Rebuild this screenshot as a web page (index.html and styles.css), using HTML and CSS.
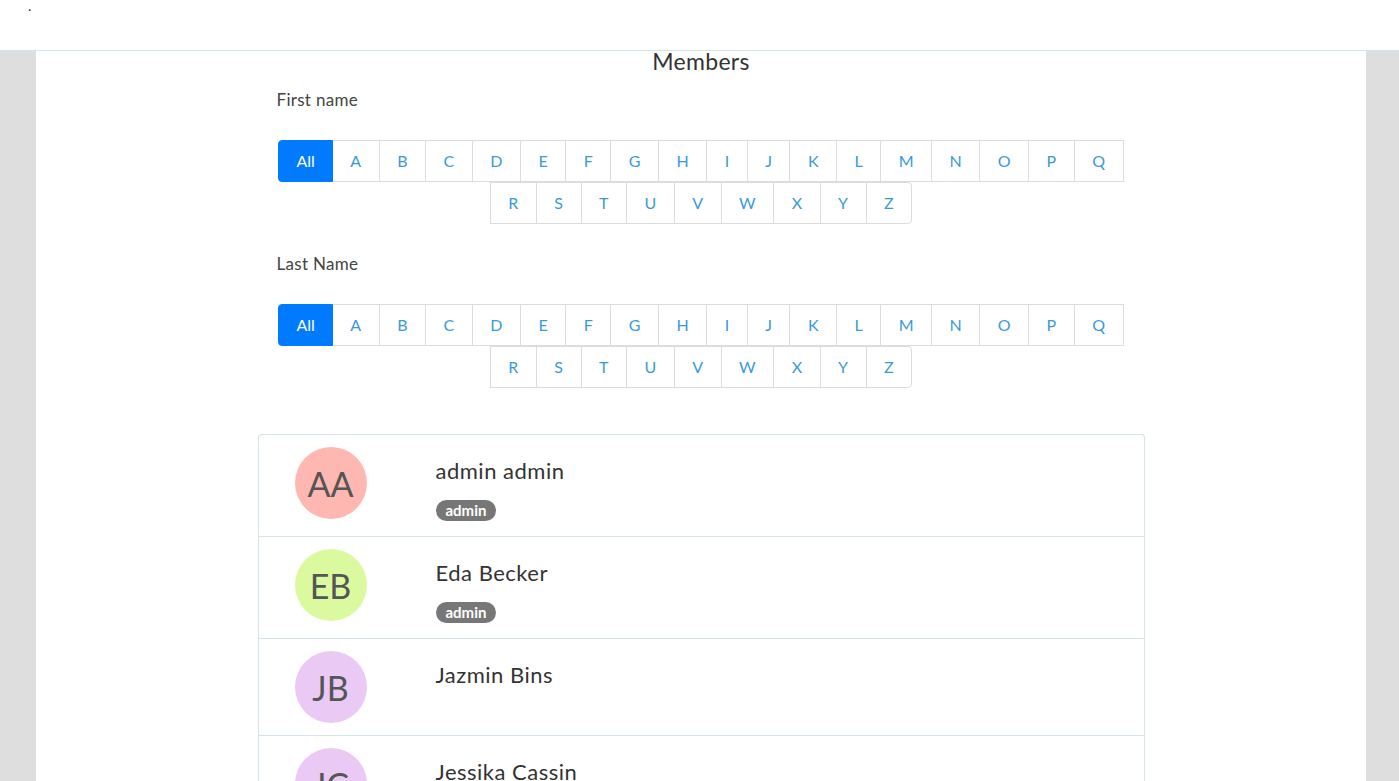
FILE: index.html
```html
<!DOCTYPE html>
<html>
<head>
<meta charset="utf-8">
<link rel="stylesheet" href="styles.css">
</head>
<body>
<header class="topbar"><span class="brand">.</span></header>
<main class="content">
  <h2 class="title">Members</h2>
  <section class="filters">
    <div class="filter">
      <div class="label">First name</div>
      <ul class="pagination">
        <li class="pg active">All</li><li class="pg">A</li><li class="pg">B</li><li class="pg">C</li><li class="pg">D</li><li class="pg">E</li><li class="pg">F</li><li class="pg">G</li><li class="pg">H</li><li class="pg">I</li><li class="pg">J</li><li class="pg">K</li><li class="pg">L</li><li class="pg">M</li><li class="pg">N</li><li class="pg">O</li><li class="pg">P</li><li class="pg">Q</li><li class="pg">R</li><li class="pg">S</li><li class="pg">T</li><li class="pg">U</li><li class="pg">V</li><li class="pg">W</li><li class="pg">X</li><li class="pg">Y</li><li class="pg">Z</li>
      </ul>
    </div>
    <div class="filter">
      <div class="label">Last Name</div>
      <ul class="pagination">
        <li class="pg active">All</li><li class="pg">A</li><li class="pg">B</li><li class="pg">C</li><li class="pg">D</li><li class="pg">E</li><li class="pg">F</li><li class="pg">G</li><li class="pg">H</li><li class="pg">I</li><li class="pg">J</li><li class="pg">K</li><li class="pg">L</li><li class="pg">M</li><li class="pg">N</li><li class="pg">O</li><li class="pg">P</li><li class="pg">Q</li><li class="pg">R</li><li class="pg">S</li><li class="pg">T</li><li class="pg">U</li><li class="pg">V</li><li class="pg">W</li><li class="pg">X</li><li class="pg">Y</li><li class="pg">Z</li>
      </ul>
    </div>
  </section>
  <ul class="members">
    <li class="member">
      <div class="avatar-col"><div class="avatar av-red">AA</div></div>
      <div class="info"><div class="name">admin admin</div><span class="badge">admin</span></div>
    </li>
    <li class="member">
      <div class="avatar-col"><div class="avatar av-green">EB</div></div>
      <div class="info"><div class="name">Eda Becker</div><span class="badge">admin</span></div>
    </li>
    <li class="member">
      <div class="avatar-col"><div class="avatar av-purple">JB</div></div>
      <div class="info"><div class="name">Jazmin Bins</div></div>
    </li>
    <li class="member">
      <div class="avatar-col"><div class="avatar av-purple">JC</div></div>
      <div class="info"><div class="name">Jessika Cassin</div></div>
    </li>
  </ul>
</main>
</body>
</html>
```
FILE: styles.css
```css
html, body {
  margin: 0;
  padding: 0;
}
body {
  background: #dedede;
  font-family: Lato, "Open Sans", sans-serif;
  color: #333;
  overflow: hidden;
  height: 781px;
}
.topbar {
  height: 50px;
  background: #fff;
  border-bottom: 1px solid #d3e2ec;
  box-sizing: content-box;
}
.brand {
  display: block;
  padding: 0 0 0 28px;
  font-size: 14px;
  line-height: 12px;
  color: #333;
}
.content {
  width: 1330px;
  margin-left: 36px;
  background: #fff;
  min-height: 730px;
  display: flex;
  flex-direction: column;
  align-items: center;
}
.title {
  margin: 0;
  font-size: 23px;
  line-height: 21px;
  font-weight: 400;
  letter-spacing: 0.3px;
  color: #333;
  height: 21px;
}
.filters {
  width: 849px;
  margin-top: 16px;
}
.filter {
  margin-bottom: 28px;
}
.filter + .filter {
  margin-bottom: 0;
}
.label {
  font-size: 17px;
  line-height: 24px;
  letter-spacing: 0.3px;
  color: #444;
  margin-bottom: 28px;
}
.pagination {
  list-style: none;
  margin: 0;
  padding: 0 0 0 1px;
  display: flex;
  flex-wrap: wrap;
  justify-content: center;
}
.pg {
  margin: 0 0 0 -1px;
  display: block;
  background: #fff;
  border: 1px solid #dcdcdc;
  padding: 10px 17.5px;
  font-size: 16px;
  line-height: 20px;
  color: #3a9ad9;
}
.pg:first-child {
  border-radius: 4px 0 0 4px;
}
.pg:last-child {
  border-radius: 0 4px 4px 0;
}
.pg.active {
  background: #007bff;
  border-color: #007bff;
  color: #fff;
  position: relative;
  padding-left: 17px;
  padding-right: 17px;
}
.members {
  list-style: none;
  margin: 46px 0 0 0;
  padding: 0;
  width: 885px;
  border: 1px solid #d3e2ec;
  border-radius: 4px 4px 0 0;
  border-bottom: none;
}
.member {
  display: flex;
  align-items: flex-start;
  padding: 12px 0;
  border-bottom: 1px solid #d3e2ec;
}
.avatar-col {
  width: 144px;
  display: flex;
  justify-content: center;
}
.avatar {
  width: 72px;
  height: 72px;
  border-radius: 50%;
  display: flex;
  align-items: center;
  justify-content: center;
  font-size: 34px;
  font-weight: 400;
  color: #555;
}
.av-red { background: #ffb8b1; }
.av-green { background: #dbfa9f; }
.av-purple { background: #ebc9f5; }
.info {
  margin-left: 33px;
  display: flex;
  flex-direction: column;
  align-items: flex-start;
}
.name {
  margin-top: 11px;
  font-size: 22px;
  line-height: 26px;
  letter-spacing: 0.5px;
  color: #333;
  margin-bottom: 16px;
}
.badge {
  display: inline-block;
  background: #777;
  color: #fff;
  font-size: 15px;
  font-weight: 700;
  line-height: 17px;
  padding: 2px 10px;
  border-radius: 11px;
  margin-bottom: 3px;
}
```
